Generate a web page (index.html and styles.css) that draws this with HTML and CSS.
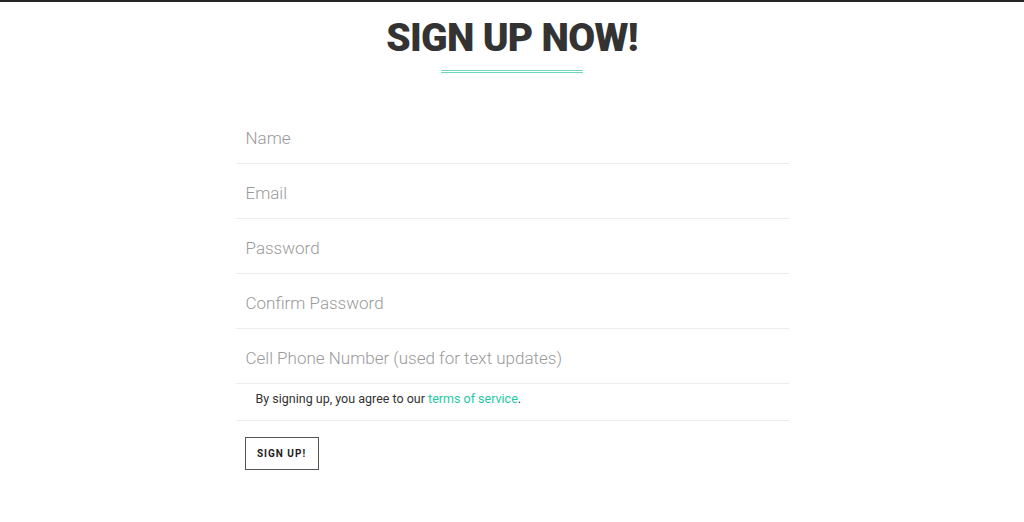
FILE: index.html
```html
<!DOCTYPE html>
<html>
<head>
<meta charset="utf-8">
<link rel="stylesheet" href="styles.css">
</head>
<body>
<div class="topbar"></div>
<header class="head">
  <h1 class="title">SIGN UP NOW!</h1>
  <div class="rule"></div>
</header>
<form class="form">
  <div class="row"><input class="field" type="text" placeholder="Name"></div>
  <div class="row"><input class="field" type="email" placeholder="Email"></div>
  <div class="row"><input class="field" type="password" placeholder="Password"></div>
  <div class="row"><input class="field" type="password" placeholder="Confirm Password"></div>
  <div class="row"><input class="field" type="tel" placeholder="Cell Phone Number (used for text updates)"></div>
  <p class="terms">By signing up, you agree to our <a href="#" class="link">terms of service</a>.</p>
  <div class="actions"><button type="button" class="btn">SIGN UP!</button></div>
</form>
</body>
</html>
```
FILE: styles.css
```css
html, body {
  margin: 0;
  padding: 0;
  background: #fff;
}
body {
  font-family: Roboto, "Liberation Sans", sans-serif;
}
.topbar {
  height: 2px;
  background: #262626;
}
.head {
  display: flex;
  flex-direction: column;
  align-items: center;
}
.title {
  margin: 13px 0 0;
  font-family: Roboto, "Liberation Sans", sans-serif;
  font-weight: 900;
  font-size: 39px;
  line-height: 46px;
  color: #333;
  letter-spacing: -0.7px;
}
.rule {
  width: 142px;
  height: 1px;
  border-top: 1px solid #6fd6bf;
  border-bottom: 1px solid #6fd6bf;
  margin-top: 9px;
}
.form {
  width: 553px;
  margin: 36px auto 0;
}
.row {
  border-bottom: 1px solid #ececec;
}
.field {
  display: block;
  width: 100%;
  box-sizing: border-box;
  height: 54px;
  border: 0;
  outline: 0;
  padding: 4px 10px 0;
  font-family: Roboto, "Liberation Sans", sans-serif;
  font-weight: 300;
  font-size: 17px;
  color: #333;
  background: transparent;
}
.field::placeholder {
  color: #9a9a9a;
}
.terms {
  margin: 0;
  padding: 7px 20px 0;
  height: 29px;
  font-size: 12.5px;
  line-height: 16px;
  color: #333;
  border-bottom: 1px solid #ececec;
}
.link {
  color: #1ec8a5;
  text-decoration: none;
}
.actions {
  padding: 16px 9px;
}
.btn {
  width: 74px;
  height: 33px;
  border: 1px solid #555;
  background: #fff;
  font-family: Roboto, "Liberation Sans", sans-serif;
  font-weight: 700;
  font-size: 10px;
  letter-spacing: 1px;
  color: #222;
  padding: 0;
}
```
